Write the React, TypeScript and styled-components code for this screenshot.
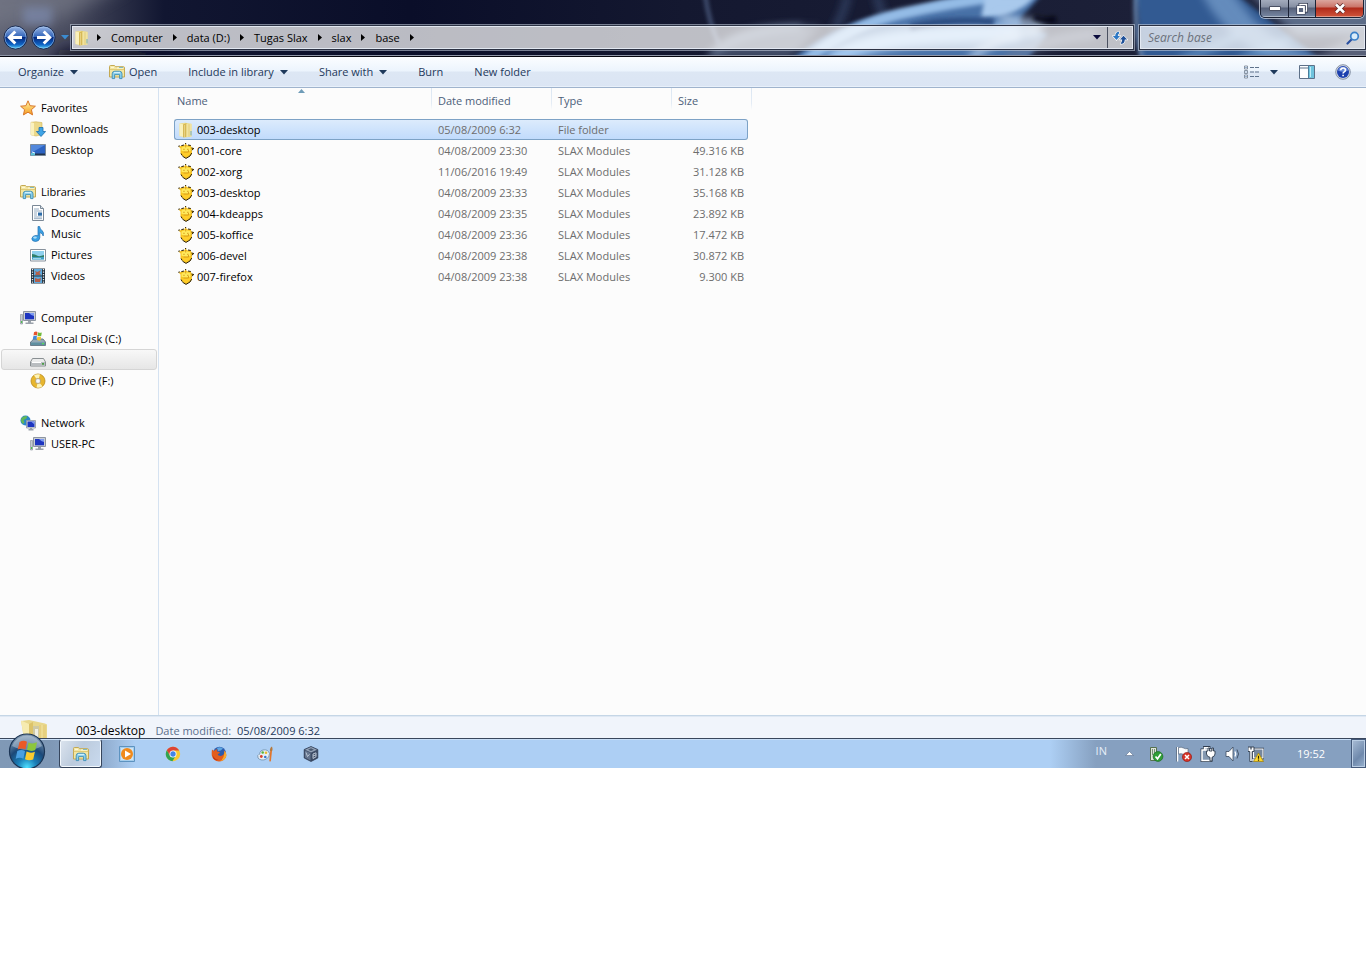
import React from "react";
import styled, { createGlobalStyle, css } from "styled-components";

const GlobalStyle = createGlobalStyle`
  *, *::before, *::after { box-sizing: border-box; }
  body { margin: 0; background: #fff; }
  body, button, input { font-family: "Open Sans", "Noto Sans", sans-serif; font-size: 11px; line-height: 16px; color: #000; }
  button { margin: 0; padding: 0; border: 0; background: none; }
  a { color: inherit; text-decoration: none; }
  svg { display: block; flex: none; }
`;

/* ---------- frame ---------- */

const Screen = styled.div`
  display: flex;
  flex-direction: column;
  overflow: hidden;
`;

const Frame = styled.header`
  position: relative;
  height: 57px;
  display: flex;
  flex-direction: column;
  justify-content: flex-end;
  background: #0b0f29;
  border-bottom: 1px solid #05060f;
  box-shadow: inset 0 -1px 0 rgba(215, 222, 235, 0.65);
`;

const Wallpaper = styled.svg`
  position: absolute;
  inset: 0;
  width: 100%;
  height: 55px;
`;

const Controls = styled.div`
  position: absolute;
  top: 0;
  right: 2px;
  display: flex;
  height: 18px;
  border: 1px solid #1c2336;
  border-top: 0;
  border-radius: 0 0 5px 5px;
  overflow: hidden;
  box-shadow: 0 0 0 1px rgba(225, 232, 245, 0.65);
`;

const ControlButton = styled.button<{ $close?: boolean }>`
  width: ${(p) => (p.$close ? 48 : 27)}px;
  display: flex;
  align-items: center;
  justify-content: center;
  background: ${(p) =>
    p.$close
      ? "linear-gradient(#dba69e 0, #cb7468 7px, #b02a1a 8px, #d0553c 17px)"
      : "linear-gradient(#a3abbc 0, #868fa3 7px, #566079 8px, #7888a3 17px)"};
  box-shadow: inset 0 -1px 0 rgba(255, 255, 255, 0.4);
  & + & { border-left: 1px solid #1c2336; }
`;

const NavRow = styled.div`
  position: relative;
  display: flex;
  align-items: center;
  height: 31px;
  padding: 0 1px 6px 3px;
`;

const RoundButton = styled.button`
  width: 28px;
  height: 25px;
  display: flex;
  align-items: center;
`;

const RecentButton = styled.button`
  width: 12px;
  height: 24px;
  display: flex;
  align-items: center;
  justify-content: center;
`;

const glassField = css`
  display: flex;
  align-items: center;
  height: 23px;
  border: 1px solid rgba(230, 235, 245, 0.9);
  outline: 1px solid #2b3244;
  box-shadow: 0 0 0 2px rgba(190, 200, 215, 0.6);
  background: rgba(255, 255, 255, 0.72);
`;

const AddressBar = styled.nav`
  ${glassField}
  flex: 1;
  min-width: 0;
  margin-left: 1px;
  padding-left: 1px;
`;

const Crumbs = styled.div`
  flex: 1;
  display: flex;
  align-items: center;
  gap: 10px;
  padding-left: 7px;
`;

const Crumb = styled.button`
  white-space: nowrap;
`;

const AddressButton = styled.button<{ $divided?: boolean }>`
  width: ${(p) => (p.$divided ? 25 : 20)}px;
  height: 21px;
  display: flex;
  align-items: center;
  justify-content: center;
  ${(p) => p.$divided && "border-left: 1px solid #4a5060;"}
`;

const SearchBox = styled.form`
  ${glassField}
  width: 225px;
  margin-left: 7px;
  padding: 0 4px 0 7px;
`;

const SearchInput = styled.input`
  flex: 1;
  min-width: 0;
  padding: 0;
  border: 0;
  outline: 0;
  background: transparent;
  font-size: 12px;
  &::placeholder { color: #6c727c; font-style: italic; opacity: 1; }
`;

/* ---------- command bar ---------- */

const CommandBar = styled.div`
  display: flex;
  align-items: center;
  gap: 31px;
  height: 31px;
  padding: 0 15px 0 18px;
  background: linear-gradient(#fbfdff 0, #ecf4fd 14px, #dde7f4 15px, #dbe5f4 100%);
  border-bottom: 1px solid #9fb3cd;
  box-shadow: inset 0 -1px 0 #e8f0fa;
`;

const Command = styled.button<{ $icon?: boolean }>`
  display: flex;
  align-items: center;
  gap: ${(p) => (p.$icon ? 4 : 6)}px;
  color: #1e395b;
  white-space: nowrap;
`;

const CommandTools = styled.div`
  margin-left: auto;
  display: flex;
  align-items: center;
  gap: 20px;
`;

const ToolPair = styled.div`
  display: flex;
  align-items: center;
  gap: 10px;
  margin-right: 1px;
`;

/* ---------- body ---------- */

const Body = styled.div`
  display: flex;
  min-height: 627px;
  background: #fcfcfc;
`;

const Sidebar = styled.nav`
  flex: none;
  width: 159px;
  padding: 9px 1px;
  border-right: 1px solid #d5e2f1;
`;

const TreeGroup = styled.div`
  margin-bottom: 21px;
`;

const TreeItem = styled.a<{ $root?: boolean; $current?: boolean }>`
  display: flex;
  align-items: center;
  gap: 5px;
  height: 21px;
  padding-left: ${(p) => (p.$root ? 18 : 28)}px;
  border: 1px solid ${(p) => (p.$current ? "#d5d5d5" : "transparent")};
  border-radius: 3px;
  background: ${(p) => (p.$current ? "linear-gradient(#f8f8f8, #e6e6e6)" : "none")};
  white-space: nowrap;
`;

const Files = styled.main`
  flex: 1;
  padding-left: 15px;
`;

const FileTable = styled.table`
  width: 578px;
  table-layout: fixed;
  border-collapse: separate;
  border-spacing: 0;
`;

const HeadCell = styled.th<{ $width: number; $sorted?: boolean }>`
  position: relative;
  width: ${(p) => p.$width}px;
  height: 31px;
  padding: 5px 0 0 ${(p) => (p.$sorted ? 3 : 7)}px;
  vertical-align: top;
  text-align: left;
  font-weight: 400;
  color: #4c607a;
  background: ${(p) =>
    p.$sorted ? "none" : "linear-gradient(#dbe6f2, #e4ecf5 70%, #fcfcfc) left top / 1px 22px no-repeat"};
`;

const SpacerHead = styled.td`
  width: 4px;
  background: linear-gradient(#dbe6f2, #e4ecf5 70%, #fcfcfc) right top / 1px 22px no-repeat;
`;

const SortMark = styled.span`
  position: absolute;
  top: 1px;
  left: 50%;
  margin-left: -5px;
`;

const Cell = styled.td<{ $end?: boolean }>`
  height: 21px;
  padding: 0 ${(p) => (p.$end ? 4 : 0)}px 0 7px;
  text-align: ${(p) => (p.$end ? "right" : "left")};
  color: #6d6d6d;
  white-space: nowrap;
`;

const NameCell = styled(Cell)`
  padding-left: 4px;
  color: #000;
`;

const FileRow = styled.tr<{ $selected?: boolean }>`
  ${(p) =>
    p.$selected &&
    css`
      ${Cell}:not(:last-child) {
        height: 21px;
        line-height: 19px;
        background: linear-gradient(#dcebfc, #c1dbfc);
        border: solid #7da2c6;
        border-width: 1px 0;
      }
      ${Cell}:first-child { padding-left: 3px; border-left-width: 1px; border-radius: 3px 0 0 3px; }
      ${Cell}:nth-child(4) { border-right-width: 1px; border-radius: 0 3px 3px 0; }
    `}
`;

const FileName = styled.span`
  display: flex;
  align-items: center;
  gap: 3px;
`;

const Details = styled.footer`
  display: flex;
  align-items: flex-start;
  height: 23px;
  padding: 4px 0 0 20px;
  background: #f0f4fb;
  border-top: 1px solid #c5d6e6;
  box-shadow: inset 0 1px 0 #dfe8f3;
  color: #1e395b;
`;

const DetailName = styled.span`
  margin: 3px 10px 0 28px;
  font-size: 12px;
  color: #000;
`;

const DetailText = styled.span<{ $label?: boolean }>`
  margin: 3px 6px 0 0;
  color: ${(p) => (p.$label ? "#5a6f8c" : "#1e395b")};
`;

/* ---------- taskbar ---------- */

const Taskbar = styled.div`
  position: relative;
  display: flex;
  height: 30px;
  border-top: 1px solid #39465c;
  box-shadow: inset 0 1px 0 #c9dff8;
  background:
    linear-gradient(90deg, transparent calc(100% - 316px), #86a0c0 calc(100% - 270px)),
    linear-gradient(90deg, #8099b6 0, #7f98b6 50px, #8fabcd 102px, #adcff4 135px);
`;

const StartButton = styled.button`
  position: absolute;
  left: 8px;
  bottom: 0;
`;

const Pinned = styled.div`
  display: flex;
  gap: 3px;
  padding-left: 59px;
`;

const TaskButton = styled.button<{ $active?: boolean }>`
  width: 43px;
  height: 29px;
  display: flex;
  align-items: center;
  justify-content: center;
  ${(p) =>
    p.$active &&
    css`
      border: 1px solid #36455c;
      border-top-color: #eef4fb;
      border-radius: 3px;
      background: linear-gradient(120deg, #dce4ee, #bccbdd 45%, #c9daef);
      box-shadow: inset 0 0 0 1px #f3f8fd;
    `}
`;

const Tray = styled.div`
  margin-left: auto;
  display: flex;
  align-items: center;
  gap: 8px;
  color: #fff;
`;

const Language = styled.button`
  margin: 0 7px 6px 0;
  color: #e6eef8;
`;

const TrayButton = styled.button`
  min-width: 16px;
  display: flex;
  justify-content: center;
`;

const ExpandButton = styled(TrayButton)`
  margin-right: 2px;
`;

const SpacedTrayButton = styled(TrayButton)`
  margin-right: 4px;
`;

const Clock = styled.time`
  margin: 0 18px 0 25px;
`;

const ShowDesktop = styled.button`
  width: 15px;
  height: 29px;
  border: 1px solid #44597a;
  background: linear-gradient(135deg, #a9bdd6, #6f89ac 60%, #9ab3d0);
  box-shadow: inset 0 0 0 1px #b9cde4;
`;

/* ---------- icons ---------- */

const Icon16 = ({ children }: { children: React.ReactNode }) => (
  <svg width="16" height="16" viewBox="0 0 16 16" aria-hidden="true">{children}</svg>
);

const Down = ({ fill = "#1e395b" }: { fill?: string }) => (
  <svg width="8" height="5" viewBox="0 0 8 5" aria-hidden="true"><path d="M0 0h8L4 4.6z" fill={fill} /></svg>
);

const CrumbArrow = () => (
  <svg width="4" height="7" viewBox="0 0 4 7" aria-hidden="true"><path d="M0 0v7l4-3.5z" /></svg>
);

const FolderIcon = () => (
  <Icon16>
    <path d="M1.500 1.500 7 .8l6.500 1v12.700L7 15.500 1.500 14z" fill="#eddc8c" />
    <path d="M1.500 1.500 5 2.200v12.600L1.500 14z" fill="#f9f0bb" />
    <path d="M5 2.500 8.500 1v13.800L5 15.500z" fill="#d6b957" />
    <path d="M6.500 3v12" stroke="#e8d182" />
    <path d="M8.500 2h5v12.400l-5 .6z" fill="#f1e3a0" />
    <path d="M11 2.200v12.500" stroke="#e2cd7c" />
    <path d="M13 9v4.500" stroke="#6faac0" />
  </Icon16>
);

const LibraryIcon = () => (
  <Icon16>
    <path d="M.5 2.500q0-1 1-1h4l1 1.200h7.800q1.200 0 1.200 1V13H.5z" fill="#f3e6a2" stroke="#c4a953" />
    <path d="M2 3.300h3M8 4h6" stroke="#fffbe0" />
    <path d="M10 3.500h4" stroke="#7fb9c4" />
    <path d="M.8 5.500h14.400" stroke="#e0cb76" />
    <path d="M3.200 14.600V9.800q0-2.600 2.600-2.600h4.600q2.600 0 2.600 2.600v4.800h-2.400v-4H5.600v4z" fill="#8bd0ee" stroke="#3d8db5" strokeWidth=".9" />
    <path d="M5 8.600h6" stroke="#d9f3fd" />
  </Icon16>
);

const StarIcon = () => (
  <Icon16>
    <defs><linearGradient id="star" x2="0" y2="1"><stop stopColor="#fff7a8" /><stop offset="1" stopColor="#f59a1e" /></linearGradient></defs>
    <path d="m8 .8 2.100 4.900 5.300.5-4 3.500 1.200 5.200L8 12.200l-4.600 2.700 1.200-5.200-4-3.500 5.300-.5z" fill="url(#star)" stroke="#d9772a" strokeLinejoin="round" />
  </Icon16>
);

const DownloadsIcon = () => (
  <Icon16>
    <path d="M1 1.300 6 .8l6 .8v12L6 15l-5-1.200z" fill="#ecd98a" stroke="#d2b65a" strokeWidth=".6" />
    <path d="M1 1.300 4 2v12.800l-3-1z" fill="#faf1bd" />
    <path d="M9 6.500h4v4h2.600l-4.600 5-4.600-5H9z" fill="#3fa4e6" stroke="#1c6fae" strokeWidth=".8" />
  </Icon16>
);

const DesktopIcon = () => (
  <Icon16>
    <path d="M.5 2.500h15v11H.5z" fill="#2c63c2" stroke="#7b8a99" />
    <path d="M1 3h14L1 11z" fill="#5288dc" />
    <path d="M1 11.500h14V13H1z" fill="#23364e" />
    <path d="M1 11h4v2.500H1z" fill="#5cc0d8" />
    <path d="m2 10 3 1" stroke="#e8f6ff" />
  </Icon16>
);

const DocumentIcon = () => (
  <Icon16>
    <path d="M2.500.5h8l3 3v12h-11z" fill="#fff" stroke="#7b8896" />
    <path d="M10.500.5v3h3" fill="#dce3ea" stroke="#7b8896" />
    <path d="M4 4h5M4 6h8M4 8h3M4 10h3M4 12h8M4 13.700h8" stroke="#8aa3ba" strokeWidth=".9" />
    <path d="M8 7.500h4v3.200H8z" fill="#2d6ca8" />
  </Icon16>
);

const MusicIcon = () => (
  <Icon16>
    <path d="M8 .5h1.600q.4 2.800 2.600 4.200 2 1.600 1 5.300-.4-2.600-3.400-3.500V12q-.5 3.400-4.300 3.500-3.700-.3-3.700-2.700Q2.200 9.700 6 9.400q1.200 0 2 .4z" fill="#3aa0e2" stroke="#1f6fb2" strokeWidth=".7" />
    <ellipse cx="5" cy="11.600" rx="1.900" ry="1.100" fill="#a9dcf8" />
  </Icon16>
);

const PictureIcon = () => (
  <Icon16>
    <path d="M.5 2.500h15v11.500H.5z" fill="#fff" stroke="#87919c" />
    <path d="M2 4h12v8.500H2z" fill="#8fd0ee" />
    <path d="M2 7q3 0 5 1.500T14 8v2.500H2z" fill="#2f7f6a" />
    <path d="M2 10.200h12v2.300H2z" fill="#3f9fc6" />
    <path d="M3 11.500h8" stroke="#c9eef5" strokeWidth=".7" />
  </Icon16>
);

const VideoIcon = () => (
  <Icon16>
    <path d="M1 .5h14v15H1z" fill="#22303d" />
    <path d="M4 1h8v6.500H4zM4 8.500h8V15H4z" fill="#5fa9dc" />
    <path d="m4.500 3 3 1 3.500-2-1.500 3L11 7H5l1-2zM5 10l3 1 3-1-1 4H5z" fill="#b2604c" />
    <path d="M2.500 1v14M13.500 1v14" stroke="#e9eef2" strokeWidth="1.300" strokeDasharray="1.300 1.200" />
  </Icon16>
);

const ComputerIcon = () => (
  <Icon16>
    <path d="M.5 4.500h2v9.500h-2z" fill="#c6ccd2" stroke="#7f8a94" strokeWidth=".6" />
    <path d="M1 11h1.200v2H1z" fill="#4fc04f" />
    <path d="M3.500 1.500h12v9h-12z" fill="#c9ced6" stroke="#8d95a0" />
    <path d="M5 3h9v6.300H5z" fill="#1d35c0" />
    <path d="M9 3h5v3q-3-.5-5-3z" fill="#7d9af0" />
    <path d="M8 11h3v1.500h2.500V14h-8v-1.500H8z" fill="#9aa1aa" />
  </Icon16>
);

const LocalDiskIcon = () => (
  <Icon16>
    <path d="m2.500 9.500 1-1.500h9.500l2.500 3v3.500H.5V11z" fill="#93a8b5" stroke="#546877" strokeWidth=".8" />
    <path d="M1 11.500h14v2.500H1z" fill="#5f8fa0" />
    <path d="M12 12h2v1.300h-2z" fill="#55e055" />
    <path d="M4 1.200q2-1.200 3.500-.2L7 4.500q-1.700-.8-3.500 0z" fill="#e5532d" />
    <path d="M8 1.200q1.800 1 3.800.2L11.200 5Q9.300 5.700 7.500 4.700z" fill="#6fb93c" />
    <path d="M3.300 5.200q2-1 3.600-.1L6.400 8.600q-1.700-.8-3.600 0z" fill="#3f87d8" />
    <path d="M7.400 5.500q1.800.9 3.700.2l-.6 3.500q-1.900.6-3.600-.4z" fill="#f6c52c" />
  </Icon16>
);

const DriveIcon = () => (
  <Icon16>
    <path d="M2.500 6.500h11l2 3.500v4H.5v-4z" fill="#eceded" stroke="#7d8387" strokeWidth=".9" />
    <path d="M1 10h14v3.500H1z" fill="#b9bdc0" />
    <path d="M2 10.500h9" stroke="#fff" />
    <path d="M12 11h2v1.800h-2z" fill="#4b9e45" />
  </Icon16>
);

const DiscIcon = () => (
  <Icon16>
    <circle cx="8" cy="8" r="7" fill="#e7b62e" stroke="#b98a1a" strokeWidth=".8" />
    <path d="M8 8 4 2.300Q7 .6 10 1.500zM8 8l4.500 5.200Q10 15.200 6.500 14.600z" fill="#fdf3b8" />
    <circle cx="8" cy="8" r="2.700" fill="#e4e8ee" stroke="#a98d4a" strokeWidth=".6" />
    <circle cx="8" cy="8" r="1" fill="#fff" />
  </Icon16>
);

const NetworkIcon = () => (
  <Icon16>
    <circle cx="5.500" cy="5.500" r="5" fill="#2b86c9" />
    <path d="M2 2.500Q5 0 7.500 1.500L6 4 3.500 5l1 2.500L3 9Q-.5 6 2 2.500z" fill="#62b858" />
    <path d="M6.500 5.500h9v7.500h-9z" fill="#d4d9e0" stroke="#8d95a0" strokeWidth=".8" />
    <path d="M7.500 6.500h7V12h-7z" fill="#1d35c0" />
    <path d="M11 6.500h3.500v3z" fill="#7d9af0" />
    <path d="M10 13h2v1h1.500v1.500h-5V14H10z" fill="#9aa1aa" />
  </Icon16>
);

const ModuleIcon = () => (
  <Icon16>
    <path d="m2.500 5.500-2-2L3.500 3l3-.8L7.500 0l1.300 2.200 4 .3.700 2 2.300.8-2 1.700.2 3.500-2 2.500L8 15.200 4.300 12.800 2.500 10z" fill="#f7c322" />
    <path d="M3.500 4.500 7.500 3l4.800 1.300L12.500 8q-4.500 1.500-9-.2z" fill="#ffe95c" />
    <path d="M3.500 9q4.500 1.500 9 0v2L8 13.700 4.500 11.500z" fill="#ffcd2a" />
    <path d="m.3 3.300 1.500-.4M7 .6h1.200M13.500 5l2.300.5-2 1.700M13.700 10l-1.700 3-4 2.400-3.500-2.200M3 10.500l1.200 2M3.300 2.700 6 2M10 2l2.800.5" fill="none" stroke="#2a1e05" />
    <path d="M5.200 6.300h1.500M9 6.300h1.600M5.500 9h5v-2M7.700 2v2.500" fill="none" stroke="#d79a18" strokeWidth=".9" />
  </Icon16>
);

const Orb = ({ flip }: { flip?: boolean }) => (
  <svg width="25" height="25" viewBox="0 0 25 25" aria-hidden="true">
    <defs>
      <linearGradient id="orb" x2="0" y2="1">
        <stop stopColor="#9cb8e6" /><stop offset=".48" stopColor="#2f62b8" /><stop offset=".5" stopColor="#06297e" /><stop offset=".8" stopColor="#0f63c4" /><stop offset="1" stopColor="#52d2fb" />
      </linearGradient>
    </defs>
    <circle cx="12.500" cy="12.500" r="11.500" fill="url(#orb)" stroke="#16264c" />
    <circle cx="12.500" cy="12.500" r="10.600" fill="none" stroke="#b4d4f7" strokeOpacity=".65" strokeWidth=".8" />
    <path transform={flip ? "matrix(-1 0 0 1 25 0)" : undefined} d="M19 12.500H7M12.300 6.500l-6 6 6 6" fill="none" stroke="#fff" strokeWidth="3" />
  </svg>
);

const RefreshIcon = () => (
  <svg width="16" height="14" viewBox="0 0 16 14" aria-hidden="true">
    <g stroke="#fff" strokeWidth="1.200" paintOrder="stroke" fill="#2e78c4">
      <path d="M7 .8Q3.300 1 3.200 5H.8l3.700 4L8 5H5.800q0-2 1.200-2.600z" />
      <path d="M9.200 13.200q3.600-.6 3.600-4.600h2.400L11.500 4.800 8 8.600h2.200q0 2-1 3z" fill="#1d4f98" />
    </g>
  </svg>
);

const SearchIcon = () => (
  <svg width="14" height="14" viewBox="0 0 14 14" aria-hidden="true">
    <path d="M1.500 12.500 6 8" stroke="#2a4fa0" strokeWidth="2.200" strokeLinecap="round" />
    <circle cx="8.500" cy="5.200" r="3.800" fill="#d9ecfa" stroke="#3a80c8" strokeWidth="1.700" />
  </svg>
);

const ViewIcon = () => (
  <svg width="16" height="14" viewBox="0 0 16 14" aria-hidden="true">
    <path d="M.5 1h3v3h-3zM.5 5.500h3v3h-3zM.5 10h3v3h-3z" fill="#fff" stroke="#7b8898" strokeWidth=".9" />
    <path d="M1.500 2.500h1M1.500 7h1M1.500 11.500h1" stroke="#3569a8" />
    <path d="M6 2.500h4M11 2.500h4M6 7h4M11 7h4M6 11.500h4M11 11.500h4" stroke="#5f738c" strokeWidth="1.100" />
  </svg>
);

const PreviewIcon = () => (
  <svg width="16" height="14" viewBox="0 0 16 14" aria-hidden="true">
    <path d="M.5.500h15v13H.5z" fill="#fdfeff" stroke="#5d7088" />
    <path d="M1 3h9" stroke="#5d7088" />
    <path d="M10 1h5v12h-5z" fill="#6fc3dd" />
    <path d="M9.500 1v12" stroke="#4a7d9c" />
    <path d="M11.500 2v10" stroke="#c0ecf7" />
  </svg>
);

const HelpIcon = () => (
  <Icon16>
    <circle cx="8" cy="8" r="7.300" fill="#d5dbe6" stroke="#7c889c" strokeWidth=".9" />
    <circle cx="8" cy="8" r="6" fill="#1c3fae" />
    <path d="M3 6.500a5.200 5.200 0 0 1 10 0Q8 9 3 6.500z" fill="#6c8ddb" />
    <path d="M5.700 6.300Q5.800 4 8.100 4t2.300 2q0 1.200-1.200 1.900-1.100.6-1.100 1.600M8.100 10.700v1.600" fill="none" stroke="#fff" strokeWidth="1.600" />
  </Icon16>
);

const StartIcon = () => (
  <svg width="38" height="35" viewBox="0 0 38 35" aria-hidden="true">
    <defs>
      <radialGradient id="start" cx=".5" cy=".95" r=".9">
        <stop stopColor="#4fe0ff" /><stop offset=".3" stopColor="#1a7fb8" /><stop offset=".62" stopColor="#1c4878" /><stop offset="1" stopColor="#7f97b0" />
      </radialGradient>
    </defs>
    <circle cx="19" cy="18.500" r="17.500" fill="url(#start)" stroke="#1b3454" strokeWidth="1.200" />
    <path d="M4 13a16 16 0 0 1 30 0q-14 8-30 0z" fill="#dfe9f2" opacity=".4" />
    <path d="M11.500 9q4-2.400 7.500-.3l-1.600 7.800q-3.600-2-7.700 0z" fill="#ea5a27" />
    <path d="M20.500 9.500q4 2 8.500-.2l-1.700 7.700q-4.400 2-8.300-.2z" fill="#8cc63e" />
    <path d="M9.300 18q4-2 7.700 0l-1.600 7.700q-3.500-2-7.700 0z" fill="#4a9fe2" />
    <path d="M18.600 18.600q4 2 8.300.2l-1.700 7.700q-4.400 1.800-8.200-.3z" fill="#fccb2f" />
  </svg>
);

const BigFolder = () => (
  <svg width="28" height="30" viewBox="0 0 28 30" aria-hidden="true">
    <path d="M1 1 9 0l16 3.500 2 1V30H6z" fill="#e8d78c" />
    <path d="M1 .5 9 4v26H6z" fill="#f6ebb0" />
    <path d="M9 4 13 2v28H9z" fill="#dcc36a" />
    <path d="M13 6h6v24h-6z" fill="#cfc9a4" />
    <path d="M15 9h3v21h-3z" fill="#f0efe2" />
    <path d="M19 5h7v25h-7z" fill="#e6d080" />
    <path d="M22 5v25" stroke="#f4e7a6" />
  </svg>
);

const PlayerIcon = () => (
  <Icon16>
    <path d="M.5.500h15v15H.5z" fill="#a5cdec" stroke="#5d93c0" />
    <path d="M2 2h12v12H2z" fill="#cfe4f4" />
    <circle cx="8" cy="8" r="6" fill="#f08a1c" />
    <path d="M6 4.500v7L12 8z" fill="#fff" />
  </Icon16>
);

const ChromeIcon = () => (
  <Icon16>
    <circle cx="8" cy="8" r="7.200" fill="#f8c930" />
    <path d="M1.800 4.300A7.200 7.200 0 0 1 14.200 4.400H8L5 9.800z" fill="#dc4436" />
    <path d="M1.800 4.300A7.200 7.200 0 0 0 7.400 15.200L10.800 9.700 5 9.800z" fill="#31a353" />
    <circle cx="8" cy="8" r="3.500" fill="#fff" />
    <circle cx="8" cy="8" r="2.700" fill="#4285e6" />
  </Icon16>
);

const FirefoxIcon = () => (
  <Icon16>
    <circle cx="8.500" cy="7" r="6.300" fill="#2b5cae" />
    <path d="M6 2q3-1.500 6 .5Q10 5 7 5z" fill="#5ea6e0" />
    <path d="M1 3.500 3 5q1.500-2 3.500-1.800Q5.500 4.500 6 5.500q2 0 3 1-.5 1.300-2.300 1.500Q7 10 9.500 10 13.500 9.800 13.500 4.500 16.300 8 14.800 11.500 12.500 15.500 8 15.500 2 15 .8 9.500q-.3-3.500.2-6z" fill="#e25c1c" />
    <path d="M13.500 4.500Q16.300 8 14.800 11.500 12.500 15 9 15q4.500-2 4.500-10.500z" fill="#f7ab2b" />
    <path d="M1.500 9q2 4.500 6 4.800Q4.500 15 2.500 12.500z" fill="#b92d12" />
  </Icon16>
);

const PaintIcon = () => (
  <Icon16>
    <path d="M6 4q5-1 6.500 3.500.5 4-4 6-5 1.500-7.500-1.500Q0 9 2 8.300q1.500-.3 1-1.800Q3.500 4.500 6 4z" fill="#e6eef4" stroke="#6b8ca8" strokeWidth=".8" />
    <circle cx="5.700" cy="6.500" r="1.300" fill="#56b33c" />
    <circle cx="9" cy="6.800" r="1.300" fill="#e8b92d" />
    <circle cx="4.300" cy="10.500" r="1.400" fill="#d8432d" />
    <circle cx="8.300" cy="11" r="1.300" fill="#3574d0" />
    <path d="m13.200 5-.9 10q.8 1 1.600 0L15 5z" fill="#e2752a" />
    <path d="M13 5Q12.500 2 15 .5 16 3 15.200 5z" fill="#b5793e" />
  </Icon16>
);

const BoxIcon = () => (
  <Icon16>
    <path d="m8 .5 6.800 3v8.500L8 15.500 1.200 12V3.500z" fill="#3d4c66" stroke="#27344a" strokeWidth=".7" />
    <path d="m8 1 6 2.700L8 6.500 2 3.700z" fill="#94a3b8" />
    <path d="M2 4.500 7.500 7v7.500L2 11.500z" fill="#657690" />
    <path d="m3 6.500 1.500 4 2-2.200M10 8l3-1.200v4L10 12.500zM10 10l3-1.200" stroke="#c3cedb" fill="none" strokeWidth=".9" />
    <path d="M5 3.700 8 2.300l3 1.400-3 1.400z" fill="#475870" />
  </Icon16>
);

const UsbIcon = () => (
  <Icon16>
    <path d="M2.500 1.500h6v13h-6z" fill="#dfe5dc" stroke="#56714f" />
    <path d="M4.500 3v6M6.500 3v5" stroke="#7a917a" />
    <circle cx="10" cy="10.500" r="4.900" fill="#2f9e35" stroke="#1b6c22" strokeWidth=".7" />
    <path d="m7.500 10.500 2 2.300L12.800 8" stroke="#fff" strokeWidth="1.700" fill="none" />
  </Icon16>
);

const FlagIcon = () => (
  <Icon16>
    <path d="M1.500 1v14.500" stroke="#fff" strokeWidth="1.500" />
    <path d="M.5 1v14.500" stroke="#3d4d62" strokeWidth=".6" />
    <path d="M2.500 1.500q3-.8 5 .5t4.500.5v6.500q-2.500.7-4.500-.6t-5-.3z" fill="#fbfcfd" stroke="#48586d" strokeWidth=".6" />
    <circle cx="11" cy="11" r="4.600" fill="#d63227" stroke="#8e170f" strokeWidth=".6" />
    <path d="m9 9 4 4m0-4-4 4" stroke="#fff" strokeWidth="1.500" />
  </Icon16>
);

const PowerIcon = () => (
  <Icon16>
    <path d="M2 4h9v10.500H2zM4.500 1.500h4.500V4H4.500z" fill="#8498b0" stroke="#2e3b4d" strokeWidth="2.800" />
    <path d="M2 4h9v10.500H2zM4.500 1.800h4.500V4H4.500z" fill="#8498b0" stroke="#fff" strokeWidth="1.500" />
    <path d="M8 2h1.500v3H12V2h1.500v3H15v3q-.5 3-3 3.300v3.700h-2v-3.700Q7 11 6.500 8V5H8z" fill="#fff" stroke="#2e3b4d" strokeWidth=".9" />
  </Icon16>
);

const SoundIcon = () => (
  <Icon16>
    <path d="M2 5.500h3l4-4.500v14l-4-4.500H2z" fill="#fff" stroke="#3a495e" strokeWidth=".8" />
    <path d="M11 5.500q1.500 2.500 0 5" fill="none" stroke="#fff" strokeWidth="1.300" />
    <path d="M13 3.500q3 4.500 0 9" fill="none" stroke="#3a495e" strokeWidth=".9" />
  </Icon16>
);

const EthernetIcon = () => (
  <Icon16>
    <path d="M5.500 3H15v9H5.500z" fill="#8a99ab" stroke="#2e3b4d" strokeWidth="2.400" />
    <path d="M5.500 3H15v9H5.500z" fill="#75879e" stroke="#fff" strokeWidth="1.100" />
    <path d="M0 1h6v4.500H4.200v10H1.800v-10H0z" fill="#fff" stroke="#2e3b4d" strokeWidth=".9" />
    <path d="M3 1v2.500" stroke="#2e3b4d" strokeWidth="1.200" />
    <path d="M4 14h3" stroke="#fff" strokeWidth="1.200" />
    <path d="m10.500 7 5 8.500h-10z" fill="#ffd92e" stroke="#9c7d0a" strokeWidth=".7" />
    <path d="M10.500 9.800v3M10.500 13.500v1.200" stroke="#2b2303" strokeWidth="1.200" />
  </Icon16>
);

/* ---------- data ---------- */

const crumbs = ["Computer", "data (D:)", "Tugas Slax", "slax", "base"];

const tree = [
  { label: "Favorites", icon: <StarIcon />, items: [
    { label: "Downloads", icon: <DownloadsIcon /> },
    { label: "Desktop", icon: <DesktopIcon /> },
  ] },
  { label: "Libraries", icon: <LibraryIcon />, items: [
    { label: "Documents", icon: <DocumentIcon /> },
    { label: "Music", icon: <MusicIcon /> },
    { label: "Pictures", icon: <PictureIcon /> },
    { label: "Videos", icon: <VideoIcon /> },
  ] },
  { label: "Computer", icon: <ComputerIcon />, items: [
    { label: "Local Disk (C:)", icon: <LocalDiskIcon /> },
    { label: "data (D:)", icon: <DriveIcon />, current: true },
    { label: "CD Drive (F:)", icon: <DiscIcon /> },
  ] },
  { label: "Network", icon: <NetworkIcon />, items: [{ label: "USER-PC", icon: <ComputerIcon /> }] },
] as { label: string; icon: React.ReactNode; items: { label: string; icon: React.ReactNode; current?: boolean }[] }[];

const files = [
  ["003-desktop", "05/08/2009 6:32", "File folder", ""],
  ["001-core", "04/08/2009 23:30", "SLAX Modules", "49.316 KB"],
  ["002-xorg", "11/06/2016 19:49", "SLAX Modules", "31.128 KB"],
  ["003-desktop", "04/08/2009 23:33", "SLAX Modules", "35.168 KB"],
  ["004-kdeapps", "04/08/2009 23:35", "SLAX Modules", "23.892 KB"],
  ["005-koffice", "04/08/2009 23:36", "SLAX Modules", "17.472 KB"],
  ["006-devel", "04/08/2009 23:38", "SLAX Modules", "30.872 KB"],
  ["007-firefox", "04/08/2009 23:38", "SLAX Modules", "9.300 KB"],
];

const pinned = [
  { label: "Windows Media Player", icon: <PlayerIcon /> },
  { label: "Google Chrome", icon: <ChromeIcon /> },
  { label: "Firefox", icon: <FirefoxIcon /> },
  { label: "Paint", icon: <PaintIcon /> },
  { label: "VirtualBox", icon: <BoxIcon /> },
];

/* ---------- page ---------- */

const Blur = ({ id, by }: { id: string; by: number }) => (
  <filter id={id} filterUnits="userSpaceOnUse" x="-40" y="-40" width="1446" height="140">
    <feGaussianBlur stdDeviation={by} />
  </filter>
);

const Backdrop = () => (
  <Wallpaper viewBox="0 0 1366 55" preserveAspectRatio="none" aria-hidden="true">
    <defs>
      <Blur id="b2" by={2} />
      <Blur id="b4" by={4} />
      <Blur id="b9" by={9} />
      <linearGradient id="base"><stop stopColor="#5c5f70" /><stop offset=".05" stopColor="#484b5e" /><stop offset=".12" stopColor="#111631" /><stop offset=".3" stopColor="#0a0e29" /><stop offset=".5" stopColor="#141830" /><stop offset="1" stopColor="#20243c" /></linearGradient>
    </defs>
    <path d="M0 0h1366v55H0z" fill="url(#base)" />
    <path d="M-20-20h150L60 20l-80 10z" fill="#777a88" opacity=".7" filter="url(#b9)" />
    <path d="M60 50h130L120 70H50z" fill="#080b22" filter="url(#b9)" />
    <path d="M23 7h29v18H23z" fill="#7c89ad" opacity=".7" filter="url(#b4)" />
    {/* thin streaks */}
    <path d="M705-6q4 30 14 50" stroke="#52658a" strokeWidth="3" fill="none" filter="url(#b2)" />
    <path d="M848-6q-4 20-14 36M876-6l8 26" stroke="#34466a" strokeWidth="6" fill="none" filter="url(#b4)" />
    <path d="M704 60q24-34 76-34h40l-30 34z" fill="#6d7f9c" opacity=".5" filter="url(#b4)" />
    <path d="M712 54q26-24 90-27" stroke="#8295b2" strokeWidth="4" fill="none" filter="url(#b4)" />
    {/* large swoosh */}
    <path d="M790 60q40-32 80-42t118-26h56l-16 18q-14 12-4 16l24 8-30 36z" fill="#4a72a8" filter="url(#b2)" />
    <path d="M804 62q44-36 96-48t104-18" stroke="#94bce6" strokeWidth="11" fill="none" filter="url(#b2)" />
    <path d="M830 62q30-22 100-26t90-4" stroke="#a3c8ef" strokeWidth="18" fill="none" filter="url(#b4)" />
    <path d="M985-4h50q-10 14-34 20l-20 2z" fill="#a9c9ec" filter="url(#b2)" />
    <path d="M1000 18q20 4 44 8M970 60q30-30 70-26" stroke="#b4cce8" strokeWidth="7" fill="none" filter="url(#b4)" />
    <path d="M910 27q36-9 84-5" stroke="#2b4c80" strokeWidth="7" fill="none" filter="url(#b2)" />
    <path d="M1006 60q30-20 90-26" stroke="#6f7d98" strokeWidth="10" fill="none" opacity=".6" filter="url(#b4)" />
    <path d="M1034 17q10 5 22 2" stroke="#04060f" strokeWidth="6" fill="none" opacity=".8" filter="url(#b2)" />
    {/* right pane */}
    <path d="M1136-6h100l90 70H1142z" fill="#315a92" filter="url(#b2)" />
    <path d="M1136-6q-2 34 6 64" stroke="#7ba1ce" strokeWidth="3" fill="none" filter="url(#b2)" />
    <path d="M1200-10h30l24 30q30 30 80 42h-60q-56-30-74-72z" fill="#86add9" opacity=".6" filter="url(#b4)" />
    <path d="M1246-10h140v44l-90 2z" fill="#5b6c88" filter="url(#b4)" />
    <path d="M1180 60q30-10 60-26M1240 60l50-20" stroke="#83b4e2" strokeWidth="6" fill="none" opacity=".7" filter="url(#b4)" />
    <path d="M1300 66h80V20z" fill="#596078" filter="url(#b4)" />
  </Wallpaper>
);

export default function App() {
  return (
    <Screen>
      <GlobalStyle />
      <Frame>
        <Backdrop />
        <Controls>
          <ControlButton aria-label="Minimize">
            <svg width="12" height="5" viewBox="0 0 12 5"><path d="M.5.500h11v4H.5z" fill="#fff" stroke="#4a5063" /></svg>
          </ControlButton>
          <ControlButton aria-label="Restore">
            <svg width="12" height="12" viewBox="0 0 12 12">
              <path d="M4 1.500h6.500V8H4z" fill="#5b6780" stroke="#343b50" strokeWidth="3" />
              <path d="M4 1.500h6.500V8H4z" fill="#5b6780" stroke="#fff" strokeWidth="1.400" />
              <path d="M2 4h6v6H2z" fill="#5b6780" stroke="#343b50" strokeWidth="3.200" />
              <path d="M2 4h6v6H2z" fill="#5b6780" stroke="#fff" strokeWidth="1.800" />
            </svg>
          </ControlButton>
          <ControlButton $close aria-label="Close">
            <svg width="12" height="11" viewBox="0 0 12 11">
              <path d="m2 1.500 8 8m0-8-8 8" stroke="#5c2a2a" strokeWidth="4.200" />
              <path d="m2 1.500 8 8m0-8-8 8" stroke="#fff" strokeWidth="2.600" />
            </svg>
          </ControlButton>
        </Controls>
        <NavRow>
          <RoundButton aria-label="Back"><Orb /></RoundButton>
          <RoundButton aria-label="Forward"><Orb flip /></RoundButton>
          <RecentButton aria-label="Recent pages"><Down fill="#3b8bd0" /></RecentButton>
          <AddressBar aria-label="Address">
            <FolderIcon />
            <Crumbs>
              <CrumbArrow />
              {crumbs.map((c) => (
                <React.Fragment key={c}>
                  <Crumb>{c}</Crumb>
                  <CrumbArrow />
                </React.Fragment>
              ))}
            </Crumbs>
            <AddressButton aria-label="Previous locations"><Down fill="#0a0a3c" /></AddressButton>
            <AddressButton $divided aria-label="Refresh"><RefreshIcon /></AddressButton>
          </AddressBar>
          <SearchBox role="search">
            <SearchInput type="text" placeholder="Search base" aria-label="Search base" />
            <SearchIcon />
          </SearchBox>
        </NavRow>
      </Frame>

      <CommandBar role="toolbar" aria-label="Commands">
        <Command>Organize<Down /></Command>
        <Command $icon><LibraryIcon />Open</Command>
        <Command>Include in library<Down /></Command>
        <Command>Share with<Down /></Command>
        <Command>Burn</Command>
        <Command>New folder</Command>
        <CommandTools>
          <ToolPair>
            <Command aria-label="Change view"><ViewIcon /></Command>
            <Command aria-label="More view options"><Down /></Command>
          </ToolPair>
          <Command aria-label="Preview pane"><PreviewIcon /></Command>
          <Command aria-label="Help"><HelpIcon /></Command>
        </CommandTools>
      </CommandBar>

      <Body>
        <Sidebar aria-label="Folders">
          {tree.map((group) => (
            <TreeGroup key={group.label}>
              <TreeItem href="#" $root>{group.icon}{group.label}</TreeItem>
              {group.items.map((item) => (
                <TreeItem key={item.label} href="#" $current={item.current}>{item.icon}{item.label}</TreeItem>
              ))}
            </TreeGroup>
          ))}
        </Sidebar>
        <Files>
          <FileTable>
            <thead>
              <tr>
                <HeadCell $width={257} $sorted>
                  Name
                  <SortMark>
                    <svg width="7" height="4" viewBox="0 0 7 4"><path d="M0 4 3.500 0 7 4z" fill="#6f9cb8" /></svg>
                  </SortMark>
                </HeadCell>
                <HeadCell $width={120}>Date modified</HeadCell>
                <HeadCell $width={120}>Type</HeadCell>
                <HeadCell $width={77}>Size</HeadCell>
                <SpacerHead />
              </tr>
            </thead>
            <tbody>
              {files.map(([name, date, type, size], i) => (
                <FileRow key={i} $selected={i === 0}>
                  <NameCell><FileName>{i === 0 ? <FolderIcon /> : <ModuleIcon />}{name}</FileName></NameCell>
                  <Cell>{date}</Cell>
                  <Cell>{type}</Cell>
                  <Cell $end>{size}</Cell>
                  <Cell />
                </FileRow>
              ))}
            </tbody>
          </FileTable>
        </Files>
      </Body>

      <Details>
        <BigFolder />
        <DetailName>003-desktop</DetailName>
        <DetailText $label>Date modified:</DetailText>
        <DetailText>05/08/2009 6:32</DetailText>
      </Details>

      <Taskbar>
        <StartButton aria-label="Start"><StartIcon /></StartButton>
        <Pinned>
          <TaskButton $active aria-label="Windows Explorer"><LibraryIcon /></TaskButton>
          {pinned.map((p) => (
            <TaskButton key={p.label} aria-label={p.label}>{p.icon}</TaskButton>
          ))}
        </Pinned>
        <Tray>
          <Language>IN</Language>
          <ExpandButton aria-label="Show hidden icons">
            <svg width="9" height="5" viewBox="0 0 9 5"><path d="M.5 4.500 4.500.500l4 4z" fill="#fff" stroke="#5b6f8c" strokeWidth=".6" /></svg>
          </ExpandButton>
          <SpacedTrayButton aria-label="Safely remove hardware"><UsbIcon /></SpacedTrayButton>
          <TrayButton aria-label="Action center"><FlagIcon /></TrayButton>
          <TrayButton aria-label="Power"><PowerIcon /></TrayButton>
          <TrayButton aria-label="Volume"><SoundIcon /></TrayButton>
          <TrayButton aria-label="Network"><EthernetIcon /></TrayButton>
          <Clock>19:52</Clock>
          <ShowDesktop aria-label="Show desktop" />
        </Tray>
      </Taskbar>
    </Screen>
  );
}
